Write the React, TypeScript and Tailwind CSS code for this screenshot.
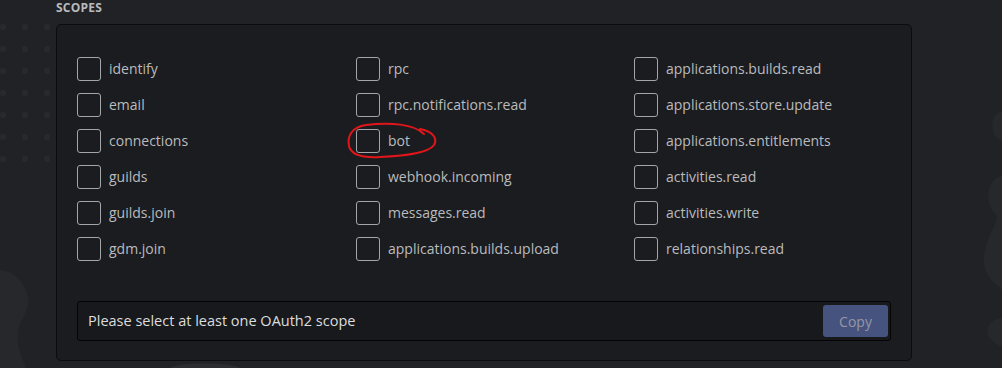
import { useState } from 'react'

const columns = [
  ['identify', 'email', 'connections', 'guilds', 'guilds.join', 'gdm.join'],
  [
    'rpc',
    'rpc.notifications.read',
    'bot',
    'webhook.incoming',
    'messages.read',
    'applications.builds.upload'
  ],
  [
    'applications.builds.read',
    'applications.store.update',
    'applications.entitlements',
    'activities.read',
    'activities.write',
    'relationships.read'
  ]
]

function Backdrop() {
  const dots: [number, number][] = []
  for (let r = 0; r < 7; r++) {
    for (let c = 0; c < 3; c++) dots.push([3 + c * 22, 27 + r * 22])
  }
  return (
    <svg className="pointer-events-none absolute inset-0" width="1002" height="368">
      {dots.map(([x, y]) => (
        <circle key={`${x}-${y}`} cx={x} cy={y} r="3.2" fill="#27292d" />
      ))}
      <path
        d="M0 270 C12 270 26 282 28 298 C30 312 20 318 18 332 C16 346 22 358 26 368 L0 368 Z"
        fill="#26282c"
      />
      <path d="M170 368 C176 362 232 362 240 368 Z" fill="#2b2d31" />
      <path d="M1002 112 C990 112 988 138 1002 140 Z" fill="#26282c" />
      <path
        d="M1002 176 C986 178 984 206 996 214 C1000 222 986 236 984 256 C982 276 996 284 1002 290 Z"
        fill="#26282c"
      />
      <path d="M1002 318 C990 318 984 330 990 338 C994 344 1000 346 1002 346 Z" fill="#26282c" />
    </svg>
  )
}

function Scope({ name }: { name: string }) {
  const [checked, setChecked] = useState(false)
  return (
    <label className="flex h-6 cursor-pointer items-center gap-2">
      <span
        onClick={() => setChecked(!checked)}
        className={
          checked
            ? 'h-6 w-6 shrink-0 rounded-[3px] border border-[#7289da] bg-[#7289da]'
            : 'h-6 w-6 shrink-0 rounded-[3px] border border-[#a2a5aa]'
        }
      />
      <span className="text-[14px] leading-5 text-[#b9bbbe]">{name}</span>
    </label>
  )
}

export default function App() {
  return (
    <div
      className="relative h-[368px] w-[1002px] overflow-hidden bg-[#202225]"
      style={{ fontFamily: '"Open Sans", "Noto Sans", sans-serif' }}
    >
      <Backdrop />
      <div className="relative pl-[56px]">
        <div className="h-[24px] pt-[1px] text-[12px] font-bold leading-[14px] tracking-[0.02em] text-[#b9bbbe]">
          SCOPES
        </div>
        <div className="h-[337px] w-[856px] rounded-[5px] border border-[#0b0c0d] bg-[#1b1c1f] px-5 pt-8 pb-5">
          <div className="grid grid-cols-[279px_278px_1fr]">
            {columns.map((col, i) => (
              <div key={i} className="flex flex-col gap-3">
                {col.map((s) => (
                  <Scope key={s} name={s} />
                ))}
              </div>
            ))}
          </div>
          <div className="mt-10 flex h-10 items-center justify-between rounded-[3px] border border-[#040405] bg-[#18191c] pl-[10px] pr-[2px]">
            <span className="text-[14.5px] text-[#dcddde]">Please select at least one OAuth2 scope</span>
            <button
              disabled
              className="h-8 w-[65px] cursor-not-allowed rounded-[3px] bg-[#47537f] text-[14px] text-[#9498a6]"
            >
              Copy
            </button>
          </div>
        </div>
      </div>
      <svg className="pointer-events-none absolute left-0 top-0" width="1002" height="368">
        <path
          d="M424 134 C414 124 390 122 366 125 C352 127 347 136 349 146 C351 155 362 158 380 157 C400 156 428 154 434 145 C438 138 432 131 420 129"
          fill="none"
          stroke="#e2161a"
          strokeWidth="2"
          strokeLinecap="round"
        />
      </svg>
    </div>
  )
}
